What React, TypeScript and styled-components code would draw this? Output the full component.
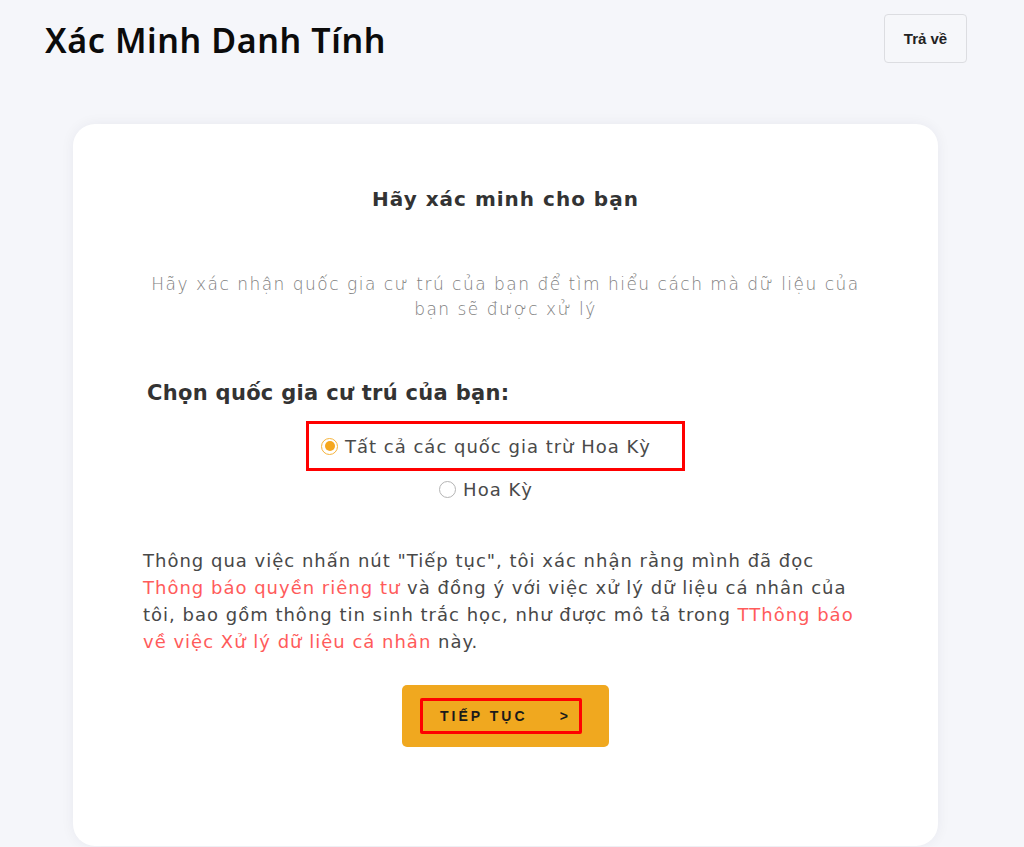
import styled, { createGlobalStyle } from 'styled-components';

const GlobalStyle = createGlobalStyle`
  html, body {
    margin: 0;
    padding: 0;
    background: #f5f6fa;
  }
  body {
    font-family: 'DejaVu Sans', 'Open Sans', sans-serif;
  }
`;

const Page = styled.div`
  width: 1024px;
  height: 847px;
  overflow: hidden;
  box-sizing: border-box;
  padding: 14px 57px 0 45px;
`;

const Header = styled.header`
  display: flex;
  justify-content: space-between;
  align-items: flex-start;
`;

const Title = styled.h1`
  margin: 6px 0 0;
  font-family: 'Noto Sans', sans-serif;
  font-weight: 600;
  font-size: 34px;
  letter-spacing: 0.6px;
  line-height: 40px;
  color: #0b0b0b;
`;

const BackButton = styled.button`
  width: 83px;
  height: 49px;
  border: 1px solid #dcdde1;
  border-radius: 4px;
  background: #f6f7fa;
  font-family: 'Liberation Sans', sans-serif;
  font-weight: 700;
  font-size: 15px;
  color: #222;
  cursor: pointer;
`;

const Card = styled.main`
  margin: 61px 0 0 28px;
  width: 865px;
  height: 722px;
  box-sizing: border-box;
  background: #fff;
  border-radius: 22px;
  box-shadow: 0 0 14px rgba(20, 30, 60, 0.06);
  padding: 60px 70px 0 70px;
  display: flex;
  flex-direction: column;
  align-items: center;
`;

const CardTitle = styled.h2`
  margin: 0;
  font-weight: 700;
  font-size: 20px;
  letter-spacing: 1px;
  line-height: 30px;
  color: #333;
`;

const Lead = styled.p`
  margin: 58px 0 0;
  max-width: 730px;
  text-align: center;
  font-weight: 200;
  font-size: 17px;
  letter-spacing: 1.5px;
  line-height: 25px;
  color: #7e7e7e;
`;

const Question = styled.h3`
  align-self: flex-start;
  margin: 56px 0 0 4px;
  font-weight: 700;
  font-size: 21px;
  letter-spacing: 0.3px;
  line-height: 30px;
  color: #333;
`;

const Options = styled.div`
  display: flex;
  flex-direction: column;
  align-items: center;
  margin-top: 13px;
  padding-right: 20px;
`;

const Option = styled.label<{ $marked?: boolean }>`
  display: flex;
  align-items: center;
  gap: 7px;
  box-sizing: border-box;
  height: ${({ $marked }) => ($marked ? '50px' : '36px')};
  padding: 0 31px 0 12px;
  border: 3px solid ${({ $marked }) => ($marked ? '#ff0000' : 'transparent')};
  font-size: 18px;
  letter-spacing: 1px;
  color: #4a4a4a;
  cursor: pointer;
`;

const Radio = styled.span<{ $checked?: boolean }>`
  width: 17px;
  height: 17px;
  box-sizing: border-box;
  border-radius: 50%;
  border: 1.5px solid ${({ $checked }) => ($checked ? '#f6b33a' : '#b4b4b4')};
  display: flex;
  align-items: center;
  justify-content: center;

  &::after {
    content: '';
    display: ${({ $checked }) => ($checked ? 'block' : 'none')};
    width: 10px;
    height: 10px;
    border-radius: 50%;
    background: #f5a71e;
  }
`;

const Consent = styled.p`
  align-self: flex-start;
  margin: 40px 0 0 0;
  font-weight: 400;
  font-size: 18px;
  letter-spacing: 1px;
  line-height: 27px;
  color: #484848;
`;

const TextLink = styled.a`
  color: #ff5b5b;
  text-decoration: none;
`;

const Continue = styled.button`
  margin-top: 30px;
  width: 207px;
  height: 62px;
  border: none;
  border-radius: 5px;
  background: #f0a81f;
  display: flex;
  align-items: center;
  justify-content: flex-start;
  padding: 0 0 0 18px;
  cursor: pointer;
`;

const ContinueLabel = styled.span`
  display: flex;
  align-items: center;
  justify-content: space-between;
  box-sizing: border-box;
  width: 162px;
  height: 36px;
  border: 3px solid #ff0000;
  border-radius: 2px;
  padding: 0 8px 0 17px;
  font-family: 'Liberation Sans', sans-serif;
  font-weight: 700;
  font-size: 14px;
  letter-spacing: 3px;
  color: #1a1a1a;
`;

export default function App() {
  return (
    <Page>
      <GlobalStyle />
      <Header>
        <Title>Xác Minh Danh Tính</Title>
        <BackButton>Trả về</BackButton>
      </Header>
      <Card>
        <CardTitle>Hãy xác minh cho bạn</CardTitle>
        <Lead>
          Hãy xác nhận quốc gia cư trú của bạn để tìm hiểu cách mà dữ liệu của bạn sẽ được xử lý
        </Lead>
        <Question>Chọn quốc gia cư trú của bạn:</Question>
        <Options>
          <Option $marked>
            <Radio $checked />
            Tất cả các quốc gia trừ Hoa Kỳ
          </Option>
          <Option>
            <Radio />
            Hoa Kỳ
          </Option>
        </Options>
        <Consent>
          Thông qua việc nhấn nút "Tiếp tục", tôi xác nhận rằng mình đã đọc{' '}
          <TextLink href="#">Thông báo quyền riêng tư</TextLink> và đồng ý với việc xử lý dữ liệu cá
          nhân của tôi, bao gồm thông tin sinh trắc học, như được mô tả trong{' '}
          <TextLink href="#">TThông báo về việc Xử lý dữ liệu cá nhân</TextLink> này.
        </Consent>
        <Continue>
          <ContinueLabel>
            <span>TIẾP TỤC</span>
            <span>&gt;</span>
          </ContinueLabel>
        </Continue>
      </Card>
    </Page>
  );
}
